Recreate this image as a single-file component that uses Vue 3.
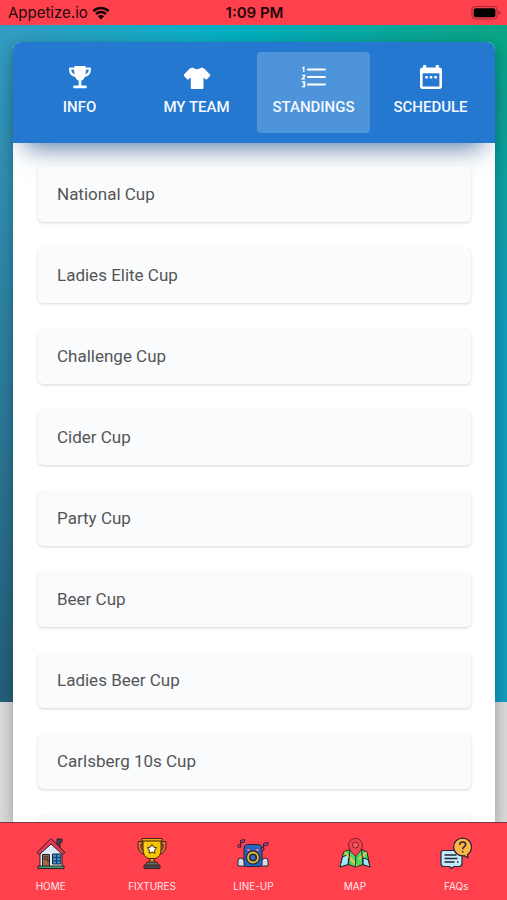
<script setup>
import { ref } from 'vue'

const tabs = ['INFO', 'MY TEAM', 'STANDINGS', 'SCHEDULE']
const active = ref('STANDINGS')
const cups = [
  'National Cup',
  'Ladies Elite Cup',
  'Challenge Cup',
  'Cider Cup',
  'Party Cup',
  'Beer Cup',
  'Ladies Beer Cup',
  'Carlsberg 10s Cup',
]
</script>

<template>
  <div class="app">
    <header class="status">
      <div class="carrier">
        <span>Appetize.io</span>
        <svg class="wifi" viewBox="0 0 18 14" aria-hidden="true">
          <path d="M1.3 5.1a11 11 0 0 1 15.4 0M4 8a7.1 7.1 0 0 1 10 0" fill="none" stroke="#140407" stroke-width="2.5" />
          <path d="M9 13.4 5.900 10.200a4.400 4.400 0 0 1 6.200 0z" fill="#140407" />
        </svg>
      </div>
      <time class="clock">1:09 PM</time>
      <svg class="battery" viewBox="0 0 30 16" aria-hidden="true">
        <rect x="1" y="1.5" width="25" height="12.5" rx="3.5" fill="none" stroke="#a52f38" stroke-width="1.2" />
        <rect x="2.8" y="3.3" width="21.6" height="9" rx="2" fill="#000" />
        <path d="M27.4 5.6q2 .6 2 2.2t-2 2.2z" fill="#a52f38" />
      </svg>
    </header>

    <main class="stage">
      <section class="card">
        <nav class="tabs" aria-label="Sections">
          <button
            v-for="t in tabs"
            :key="t"
            type="button"
            class="tab"
            :class="{ on: active === t }"
            @click="active = t"
          >
            <svg v-if="t === 'INFO'" class="glyph" viewBox="0 0 24 24" aria-hidden="true">
              <path d="M6.500 1h11v1.500h4.200c.8 0 1.300.5 1.300 1.300 0 4.600-2 7.300-6.200 8.200-.9 2-2 3.200-3.500 3.800V20.600H17.500c.8 0 1.300.6 1.300 1.300s-.5 1.300-1.300 1.300h-11c-.8 0-1.300-.6-1.300-1.300s.5-1.300 1.300-1.300h4.200V15.800C9.200 15.200 8.100 14 7.200 12 3 11.100 1 8.400 1 3.800 1 3 1.500 2.500 2.300 2.500h4.200z" fill="#fff" />
              <path d="M3.200 4.800h2.900c0 1.700.2 3.100.5 4.600C4.500 8.600 3.400 7 3.200 4.800zM20.800 4.800h-2.900c0 1.700-.2 3.100-.5 4.600 2.100-.8 3.200-2.400 3.400-4.600z" fill="#2478d0" />
            </svg>
            <svg v-else-if="t === 'MY TEAM'" class="glyph wide" viewBox="0 0 28 24" aria-hidden="true">
              <path d="M9.500 2.600Q14 5.800 18.500 2.600L21.200 3.600 27 9.600Q27.600 10.300 27 11L23.900 14.300Q23.300 14.900 22.600 14.300L20.500 12.600V23Q20.500 24 19.400 24H8.900Q7.800 24 7.800 23V12.600L5.600 14.300Q4.900 14.900 4.200 14.300L1 11Q.4 10.300 1 9.600L6.800 3.600z" fill="#fff" />
            </svg>
            <svg v-else-if="t === 'STANDINGS'" class="glyph wide" viewBox="0 0 28 24" aria-hidden="true">
              <path d="M8 4.500h16.800M8 12h16.800M8 19.500h16.800" stroke="#fff" stroke-width="2.200" stroke-linecap="round" />
              <path d="M2.300 2.800 3.800 2.300V7.100M2 10.300H4.700V11.200L2.300 13.800H5M2 17H4.700L4.600 19.200H3.100M4.600 19.200V21.500H2" fill="none" stroke="#fff" stroke-width="1.300" />
            </svg>
            <svg v-else class="glyph" viewBox="0 0 24 24" aria-hidden="true">
              <path d="M4.200 0h3v2.500h9.600V0h3v2.500h.7c1.400 0 2.500 1 2.500 2.400v16.700c0 1.400-1.100 2.400-2.500 2.400h-17C2.100 24 1 23 1 21.600V4.900c0-1.400 1.100-2.400 2.500-2.400h.7z" fill="#fff" />
              <path d="M3.600 8.300h16.800v13.200H3.600z" fill="#2478d0" />
              <path d="M6.300 11h2.500v2.500H6.300zM10.800 11h2.500v2.500h-2.500zM15.300 11h2.500v2.500h-2.500z" fill="#fff" />
            </svg>
            <span>{{ t }}</span>
          </button>
        </nav>
        <ul class="list">
          <li v-for="c in cups" :key="c"><a href="#" class="item">{{ c }}</a></li>
          <li class="item" aria-hidden="true"></li>
        </ul>
      </section>
    </main>

    <nav class="dock" aria-label="Main">
      <a href="#">
        <svg viewBox="0 0 32 32" aria-hidden="true" stroke="#22222e" stroke-width="1" stroke-linejoin="round">
          <path d="M22 2h5v3h-2V13h-4V7h1z" fill="#464655" />
          <path d="M5 13 16 4l11 9v17H5z" fill="#dfeaf8" />
          <path d="M2 15.500 16 1.500 30 15.500 27.500 17.500 16 7 4.500 17.500z" fill="#e9384b" />
          <path d="M7.500 17.500h7V30h-7z" fill="#a9673e" />
          <path d="M9 19.500h4v3H9z" fill="#80543c" stroke-width=".5" />
          <path d="M17.500 17h8.300v10h-8.300z" fill="#3d91cb" />
          <path d="M21.600 17v10M17.500 20.400h8.300M17.500 23.800h8.300" fill="none" stroke="#123c69" />
          <path d="M3 29h26v2.500H3z" fill="#47a465" />
          <circle cx="13" cy="24" r=".5" fill="#f6c64f" />
        </svg>
        <span>HOME</span>
      </a>
      <a href="#">
        <svg viewBox="0 0 32 32" aria-hidden="true" stroke="#442518" stroke-width="1" stroke-linejoin="round">
          <path d="M7 4.500H2V9q0 7 7 8.500l1 2.500 1.500-1-1-4Q5 14 5 9V7h2zM25 4.500h5V9q0 7-7 8.500L22 20l-1.500-1 1-4Q27 14 27 9V7h-2z" fill="#d9762e" />
          <path d="M14 20h4v7h-4z" fill="#e5981f" />
          <path d="M7 3h18v9q0 8.500-6 9.500h-6Q7 20.500 7 12z" fill="#f7c400" />
          <path d="M6 1.500h20V4H6z" fill="#f5a51d" />
          <path d="m16 7.500 1.600 2.600 3 .6-2 2.500.2 3-2.800-1.200-2.800 1.200.2-3-2-2.500 3-.6z" fill="#fff" />
          <path d="M11 25h10l1.500 3.500h-13z" fill="#6a6672" />
          <path d="M8 28h16v3.500H8z" fill="#484453" />
          <path d="M9.500 6v6q0 4 2 6" fill="none" stroke="#ffe36b" />
        </svg>
        <span>FIXTURES</span>
      </a>
      <a href="#">
        <svg viewBox="0 0 32 32" aria-hidden="true" stroke="#27243b" stroke-width="1" stroke-linejoin="round">
          <path d="M1 29v-5q0-3 3-3 2 0 4 4h16q2-4 4-4 3 0 3 3v5z" fill="#d7dce7" />
          <path d="M7 12q0-4.500 4-4.500h10q4 0 4 4.500v15q0 2.500-2.500 2.500h-13Q7 29.500 7 27z" fill="#2865bc" />
          <ellipse cx="11.500" cy="13" rx="2.200" ry="1.300" fill="#d888d5" stroke-width=".4" />
          <ellipse cx="20.500" cy="13" rx="2.200" ry="1.300" fill="#d888d5" stroke-width=".4" />
          <circle cx="16" cy="20.500" r="5.500" fill="none" stroke-width="3.400" />
          <circle cx="16" cy="20.500" r="5" fill="#30323e" stroke="#eabd35" stroke-width="1.800" />
          <circle cx="16" cy="20.500" r="3" fill="#3d6dbd" />
          <path d="M3.500 9.500V3.500l4-1V5l-4 1M26.500 12.500V6.500l4.500-1V8l-4.500 1" fill="#d33b7c" />
          <circle cx="2.500" cy="9" r="1.600" fill="#d33b7c" />
          <circle cx="25.500" cy="12" r="1.600" fill="#d33b7c" />
        </svg>
        <span>LINE-UP</span>
      </a>
      <a href="#">
        <svg viewBox="0 0 32 32" aria-hidden="true" stroke="#202833" stroke-width="1" stroke-linejoin="round">
          <path d="m4.500 15 6.500-2.500 6 2.500 5-2.500 6 2.500L31 30l-7-2.500-7.500 2.500-7-2.500L1 30z" fill="#4ad867" />
          <path d="m3.500 20 6.500-3-1 10.500L1 30zM24 21l5 1.500 2 7.500-7-2.500z" fill="#a4e9f6" />
          <path d="m6 15 12 14M27.500 15.500 20 22" fill="none" stroke="#f5c43b" stroke-width="2" />
          <path d="m11 12.500-1.500 15M17 15l-.5 15M22.500 12.500 24 27.500" fill="none" />
          <path d="M16.500 19.500q-7-7-7-11.500a7 6.500 0 0 1 14 0Q23.500 12.500 16.500 19.500z" fill="#f1444e" stroke="#7c1f2b" />
          <circle cx="16.500" cy="8" r="3" fill="#ff5b63" stroke="#7c1f2b" />
        </svg>
        <span>MAP</span>
      </a>
      <a href="#">
        <svg viewBox="0 0 32 32" aria-hidden="true" stroke="#272538" stroke-width="1.200" stroke-linejoin="round">
          <path d="M3 13.500h16q3 0 3 3v10q0 3-3 3h-5l-2.500 2-2-2H4q-3 0-3-3v-10q0-3 2-3z" fill="#c3eaf8" />
          <path d="M4.500 18h12M4.500 21.500h13M4.500 25h10M17 25h1.500" fill="none" stroke-width="1.500" />
          <path d="M22.500 1.200c5.200 0 9 3.800 9 8.800 0 3.500-1.600 6-4 7.600l.5 3.400-3.500-2.300c-6 .8-10.900-3.300-10.900-8.700 0-5 3.800-8.800 8.900-8.800z" fill="#ffb545" />
          <path d="M19.700 8q0-3 3-3t3 2.500q0 1.300-1.500 2.300t-1.500 2.400" fill="none" stroke-width="1.500" />
          <circle cx="22.700" cy="14.800" r=".6" fill="#272538" stroke-width=".6" />
        </svg>
        <span>FAQs</span>
      </a>
    </nav>
  </div>
</template>

<style>
body {
  margin: 0;
}
</style>

<style scoped>
.app {
  height: 100vh;
  display: flex;
  flex-direction: column;
  overflow: hidden;
  font-family: Roboto, "Liberation Sans", sans-serif;
}
.status {
  display: grid;
  grid-template-columns: 1fr auto 1fr;
  align-items: center;
  height: 25px;
  padding: 0 6px 0 8px;
  background: #ff414d;
  color: #22080c;
  font-family: Inter, "Liberation Sans", sans-serif;
  font-size: 15px;
  line-height: 25px;
}
.carrier {
  display: flex;
  align-items: center;
  gap: 4px;
}
.wifi {
  width: 18px;
  height: 14px;
}
.clock {
  font-size: 15px;
  font-weight: 600;
}
.battery {
  width: 30px;
  height: 16px;
  justify-self: end;
}
.stage {
  flex: 1;
  min-height: 0;
  overflow: hidden;
  display: flex;
  padding: 17px 12px 0 13px;
  background-color: #d9d9d9;
  background-image:
    radial-gradient(ellipse 60% 45% at 100% 0, #08a684, rgba(8, 166, 132, 0)),
    radial-gradient(ellipse 80% 110% at 0 100%, #245d78, rgba(36, 93, 120, 0)),
    linear-gradient(90deg, #36a3c8, #00b0c6 50%, #129cbd);
  background-size: 100% 85%;
  background-repeat: no-repeat;
}
.card {
  flex: 1;
  min-width: 0;
  background: #fff;
  border-radius: 8px 8px 0 0;
  box-shadow: 0 4px 14px rgba(0, 0, 0, 0.3);
}
.tabs {
  display: grid;
  grid-template-columns: repeat(4, 1fr);
  gap: 4px;
  padding: 10px 8px 10px 10px;
  border-radius: 8px 8px 0 0;
  background: #2478d0;
  box-shadow: 0 16px 24px -12px rgba(24, 74, 130, 0.75);
}
.tab {
  display: flex;
  flex-direction: column;
  align-items: center;
  gap: 8px;
  height: 81px;
  padding: 13px 0 0;
  border: 0;
  border-radius: 4px;
  background: none;
  color: #f4f9ff;
  font: 500 15px/20px Roboto, "Liberation Sans", sans-serif;
  cursor: pointer;
}
.tab.on {
  background: #4e94da;
}
.glyph {
  width: 24px;
  height: 24px;
}
.glyph.wide {
  width: 28px;
}
.list {
  display: flex;
  flex-direction: column;
  gap: 26px;
  margin: 0;
  padding: 24px 24px 0 25px;
  list-style: none;
}
.item {
  display: block;
  min-height: 23px;
  padding: 16px 19px;
  border-radius: 5px;
  background: #fafbfd;
  box-shadow: 0 1px 3px rgba(0, 0, 0, 0.16);
  color: #555;
  font-size: 17px;
  line-height: 23px;
  text-decoration: none;
}
.dock {
  position: relative;
  display: grid;
  grid-template-columns: repeat(5, 1fr);
  padding: 14px 0 6px;
  border-top: 1px solid #743b45;
  background: #ff414d;
}
.dock a {
  display: flex;
  flex-direction: column;
  align-items: center;
  gap: 9px;
  color: #ffe6e8;
  font: 10px/16px Inter, "Liberation Sans", sans-serif;
  text-decoration: none;
}
.dock svg {
  width: 32px;
  height: 32px;
}
</style>
